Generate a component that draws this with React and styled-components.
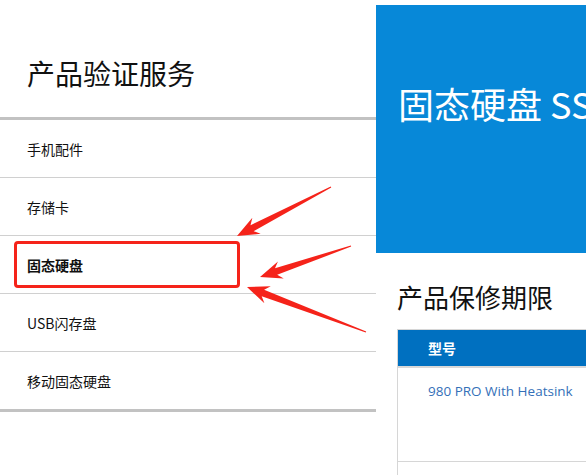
import styled, { createGlobalStyle } from "styled-components"

const GlobalStyle = createGlobalStyle`
    body{
        margin: 0;
        overflow: hidden;
        background: #FFFFFF;
        font-family: "Noto Sans CJK SC", "Noto Sans", sans-serif;
    }
`

const categories = ["手机配件", "存储卡", "固态硬盘", "USB闪存盘", "移动固态硬盘"]

const arrows = [
    { tail: [331, 187], tip: [237, 236] },
    { tail: [351, 246], tip: [260, 277] },
    { tail: [366, 332], tip: [247, 287] },
]

function arrowPoints({ tail, tip }) {
    const [tx, ty] = tail
    const [hx, hy] = tip
    const len = Math.hypot(hx - tx, hy - ty)
    const dx = (hx - tx) / len
    const dy = (hy - ty) / len
    const nx = -dy
    const ny = dx
    const at = (d, w) => [tx + dx * d + nx * w, ty + dy * d + ny * w]
    const pts = [
        at(0, 0.6),
        at(len - 17, 3.4),
        at(len - 22, 9),
        [hx, hy],
        at(len - 22, -9),
        at(len - 17, -3.4),
        at(0, -0.6),
    ]
    return pts.map((p) => p.join(",")).join(" ")
}

export default function App() {
    return (
        <Page>
            <GlobalStyle />
            <Sidebar>
                <SideTitle>产品验证服务</SideTitle>
                <CategoryList>
                    {categories.map((c) => (
                        <Category key={c} active={c === "固态硬盘"}>
                            {c}
                            {c === "固态硬盘" && <Highlight />}
                        </Category>
                    ))}
                </CategoryList>
            </Sidebar>
            <Content>
                <Hero>固态硬盘 SSD</Hero>
                <SectionTitle>产品保修期限</SectionTitle>
                <WarrantyTable>
                    <TableHead>型号</TableHead>
                    <TableRow>980 PRO With Heatsink</TableRow>
                    <TableRow />
                </WarrantyTable>
            </Content>
            <Annotations viewBox="0 0 586 475">
                {arrows.map((a, i) => (
                    <polygon key={i} points={arrowPoints(a)} fill="#F5231A" />
                ))}
            </Annotations>
        </Page>
    )
}

const Page = styled.div`
    position: relative;
    display: flex;
    width: 586px;
    height: 475px;
    overflow: hidden;
`
const Sidebar = styled.div`
    width: 376px;
    flex-shrink: 0;
`
const SideTitle = styled.h1`
    box-sizing: border-box;
    height: 117px;
    margin: 0;
    padding: 55px 0 0 27px;
    font-size: 28px;
    line-height: 36px;
    font-weight: 400;
    color: #111111;
`
const CategoryList = styled.ul`
    list-style: none;
    margin: 0;
    padding: 0;
    border-top: 3px solid #C2C2C2;
    border-bottom: 3px solid #C2C2C2;
`
const Category = styled.li`
    position: relative;
    box-sizing: border-box;
    height: 58px;
    display: flex;
    align-items: center;
    padding-left: 27px;
    font-size: 14px;
    font-weight: ${(props) => (props.active ? 700 : 400)};
    color: #111111;
    border-bottom: 1px solid #D0D0D0;
    &:last-child{
        height: 57px;
        border-bottom: none;
    }
`
const Highlight = styled.div`
    position: absolute;
    left: 14px;
    top: 5px;
    width: 226px;
    height: 47px;
    box-sizing: border-box;
    border: 3px solid #F5231A;
    border-radius: 4px;
`
const Content = styled.div`
    flex: 1;
    min-width: 0;
    padding-top: 5px;
`
const Hero = styled.div`
    box-sizing: border-box;
    height: 248px;
    padding: 76px 0 0 22px;
    background: #0788D8;
    color: #FFFFFF;
    font-size: 36px;
    line-height: 44px;
    white-space: nowrap;
    overflow: hidden;
`
const SectionTitle = styled.h2`
    margin: 28px 0 16px 21px;
    font-size: 26px;
    line-height: 32px;
    font-weight: 400;
    color: #111111;
`
const WarrantyTable = styled.div`
    margin-left: 21px;
    border-top: 1px solid #D6D6D6;
    border-left: 1px solid #D6D6D6;
`
const TableHead = styled.div`
    height: 36px;
    display: flex;
    align-items: center;
    padding-left: 30px;
    background: #0070C0;
    color: #FFFFFF;
    font-size: 14px;
    font-weight: 700;
    border-bottom: 2px solid #D8D8D8;
`
const TableRow = styled.div`
    box-sizing: border-box;
    height: 94px;
    padding: 13px 0 0 30px;
    font-family: "Open Sans", "Noto Sans", sans-serif;
    font-size: 13.5px;
    line-height: 20px;
    color: #3470B8;
    white-space: nowrap;
    border-bottom: 1px solid #D6D6D6;
`
const Annotations = styled.svg`
    position: absolute;
    left: 0;
    top: 0;
    width: 586px;
    height: 475px;
    pointer-events: none;
`
